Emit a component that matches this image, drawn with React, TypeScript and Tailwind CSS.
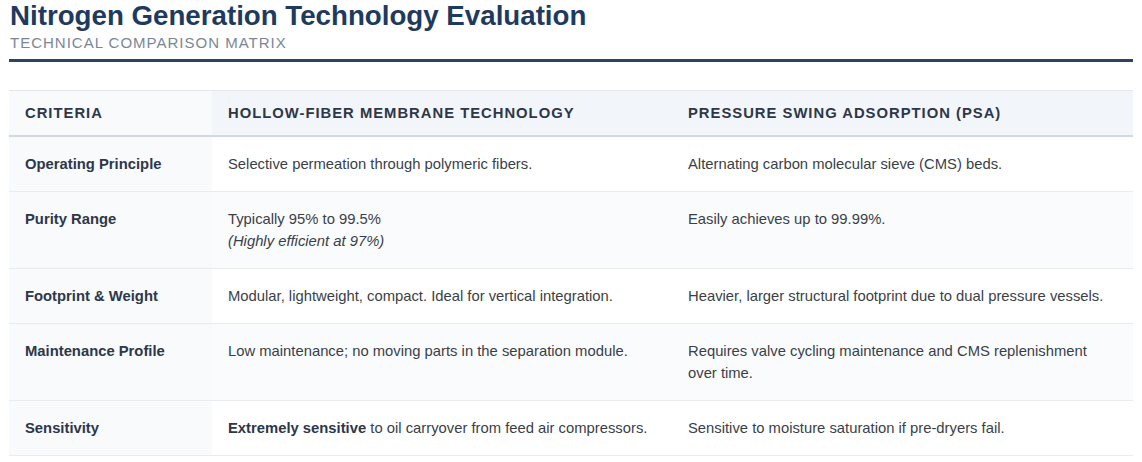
import React from "react";

const rows: { label: string; a: React.ReactNode; b: React.ReactNode }[] = [
  {
    label: "Operating Principle",
    a: "Selective permeation through polymeric fibers.",
    b: "Alternating carbon molecular sieve (CMS) beds.",
  },
  {
    label: "Purity Range",
    a: (
      <>
        Typically 95% to 99.5%
        <br />
        <span className="italic">(Highly efficient at 97%)</span>
      </>
    ),
    b: "Easily achieves up to 99.99%.",
  },
  {
    label: "Footprint & Weight",
    a: "Modular, lightweight, compact. Ideal for vertical integration.",
    b: "Heavier, larger structural footprint due to dual pressure vessels.",
  },
  {
    label: "Maintenance Profile",
    a: "Low maintenance; no moving parts in the separation module.",
    b: "Requires valve cycling maintenance and CMS replenishment over time.",
  },
  {
    label: "Sensitivity",
    a: (
      <>
        <strong className="font-bold text-[#2d3748]">Extremely sensitive</strong> to oil carryover from feed air compressors.
      </>
    ),
    b: "Sensitive to moisture saturation if pre-dryers fail.",
  },
];

export default function App() {
  return (
    <div
      className="w-[1142px] h-[462px] bg-white px-[9px] overflow-hidden"
      style={{ fontFamily: '"Liberation Sans", Arial, sans-serif' }}
    >
      <h1 className="text-[27.7px] leading-[32px] font-bold text-[#1e3a5f] pl-px">
        Nitrogen Generation Technology Evaluation
      </h1>
      <div className="text-[15px] leading-[22px] tracking-[1px] text-[#7a8797] pl-px">
        TECHNICAL COMPARISON MATRIX
      </div>
      <div className="mt-[5px] h-[3px] w-[1124px] bg-[#2e4263]" />
      <table className="mt-[28px] w-[1124px] border-collapse table-fixed text-[14.8px] leading-[22px]">
        <colgroup>
          <col className="w-[203px]" />
          <col className="w-[460px]" />
          <col />
        </colgroup>
        <thead>
          <tr className="border-t border-[#e4e8ee] border-b-2 border-b-[#d3d9e1]">
            <th className="bg-[#f8fafc] text-left px-4 py-[11px] font-bold uppercase tracking-[1px] text-[#2d3748]">
              Criteria
            </th>
            <th className="bg-[#f2f5f9] text-left px-4 py-[11px] font-bold uppercase tracking-[1px] text-[#2d3748]">
              Hollow-Fiber Membrane Technology
            </th>
            <th className="bg-[#f2f5f9] text-left px-4 py-[11px] font-bold uppercase tracking-[1px] text-[#2d3748]">
              Pressure Swing Adsorption (PSA)
            </th>
          </tr>
        </thead>
        <tbody>
          {rows.map((r, i) => (
            <tr
              key={r.label}
              className={`border-b border-[#e8ebef] ${i % 2 === 1 ? "bg-[#fafbfc]" : "bg-white"}`}
            >
              <td className="align-top px-4 py-4 font-bold text-[#2d3748] bg-[#f8fafc]">
                {r.label}
              </td>
              <td className="align-top px-4 py-4 text-[#3a3f47]">{r.a}</td>
              <td className="align-top px-4 py-4 text-[#3a3f47]">{r.b}</td>
            </tr>
          ))}
        </tbody>
      </table>
    </div>
  );
}
